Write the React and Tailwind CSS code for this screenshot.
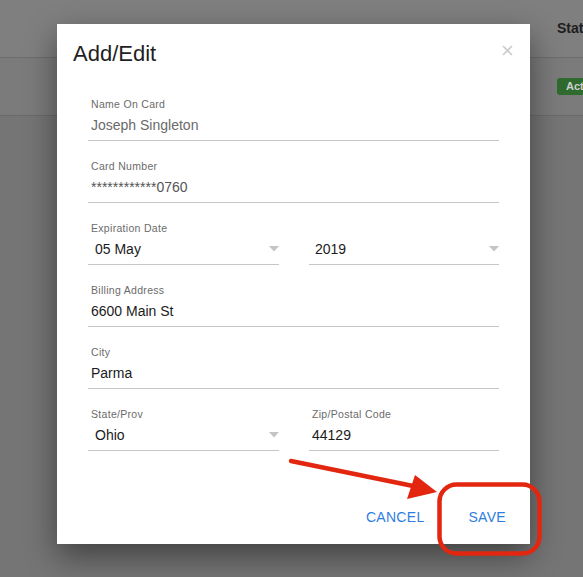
import React from 'react';

const font = { fontFamily: '"Liberation Sans", Arial, Helvetica, sans-serif' };

function Caret() {
  return (
    <svg width="10" height="6" viewBox="0 0 10 6" className="shrink-0">
      <polygon points="0,0 10,0 5,5.5" fill="#c4c4c4" />
    </svg>
  );
}

function Field({ label, value, valueClass = 'text-[#1b1b1b]', select, labelPad = 'pl-[3px]', valuePad = 'pl-[3px]' }) {
  return (
    <div className="flex flex-col w-full">
      <div className={`text-[10.5px] leading-[14px] text-[#6b6b6b] tracking-[0.3px] ${labelPad}`}>{label}</div>
      <div className={`h-[30px] flex items-center justify-between border-b border-[#c6c6c6] text-[14px] leading-[28px] pb-[1px] ${valuePad} ${valueClass}`}>
        <span>{value}</span>
        {select && <Caret />}
      </div>
    </div>
  );
}

export default function App() {
  return (
    <div className="relative w-[583px] h-[577px] overflow-hidden bg-[#757575]" style={font}>
      {/* page behind the overlay */}
      <div className="h-[58px] bg-[#7f7f7f] border-b border-[#6c6c6c] flex items-center pl-[557px]">
        <span className="text-[14px] font-bold text-[#1e1e1e] whitespace-nowrap">Status</span>
      </div>
      <div className="h-[58px] bg-[#7b7b7b] border-b border-[#6a6a6a] flex items-center pl-[557px]">
        <span className="h-[17px] px-[9px] rounded-[3px] bg-[#2f6b2f] text-[11px] leading-[17px] font-bold text-[#cfcfcf] whitespace-nowrap">Active</span>
      </div>

      {/* modal */}
      <div className="absolute left-[57px] top-[24px] w-[473px] h-[520px] bg-white shadow-[0_12px_30px_rgba(0,0,0,0.45)] flex flex-col">
        <div className="flex items-start justify-between pl-[16px] pr-[17px] pt-[17px]">
          <h2 className="text-[22px] leading-[26px] text-[#1f1f1f]">Add/Edit</h2>
          <svg width="11" height="11" viewBox="0 0 11 11" className="mt-[4px]">
            <path d="M1 1 L10 10 M10 1 L1 10" stroke="#cbcbcb" strokeWidth="1.6" />
          </svg>
        </div>

        <div className="mt-[30px] px-[31px] flex flex-col gap-[18px]">
          <Field label="Name On Card" value="Joseph Singleton" valueClass="text-[#6a6a6a]" />
          <Field label="Card Number" value="************0760" valueClass="text-[#555]" />
          <div className="flex flex-col">
            <div className="text-[10.5px] leading-[14px] text-[#6b6b6b] tracking-[0.3px] pl-[3px]">Expiration Date</div>
            <div className="flex justify-between">
              <div className="w-[191px] h-[30px] flex items-center justify-between border-b border-[#c6c6c6] text-[14px] pl-[7px] pb-[1px] text-[#1b1b1b]">
                <span>05 May</span>
                <Caret />
              </div>
              <div className="w-[190px] h-[30px] flex items-center justify-between border-b border-[#c6c6c6] text-[14px] pl-[6px] pb-[1px] text-[#1b1b1b]">
                <span>2019</span>
                <Caret />
              </div>
            </div>
          </div>
          <Field label="Billing Address" value="6600 Main St" />
          <Field label="City" value="Parma" />
          <div className="flex justify-between">
            <div className="w-[191px]">
              <Field label="State/Prov" value="Ohio" select valuePad="pl-[7px]" />
            </div>
            <div className="w-[190px]">
              <Field label="Zip/Postal Code" value="44129" />
            </div>
          </div>
        </div>

        <div className="mt-auto mb-[17px] flex justify-end gap-[44px] pr-[24px]">
          <button className="text-[14px] leading-[20px] tracking-[0.3px] text-[#2f7de1]">CANCEL</button>
          <button className="text-[14px] leading-[20px] tracking-[0.3px] text-[#2f7de1]">SAVE</button>
        </div>
      </div>

      {/* annotation */}
      <svg className="absolute left-0 top-0 pointer-events-none" width="583" height="577" viewBox="0 0 583 577">
        <line x1="291" y1="461" x2="418" y2="487" stroke="#e2260f" strokeWidth="4.5" strokeLinecap="round" />
        <polygon points="415,475 437,492 407,499" fill="#e2260f" />
        <rect x="439.5" y="484.5" width="100" height="69" rx="17" fill="none" stroke="#e2260f" strokeWidth="4.5" />
      </svg>
    </div>
  );
}
